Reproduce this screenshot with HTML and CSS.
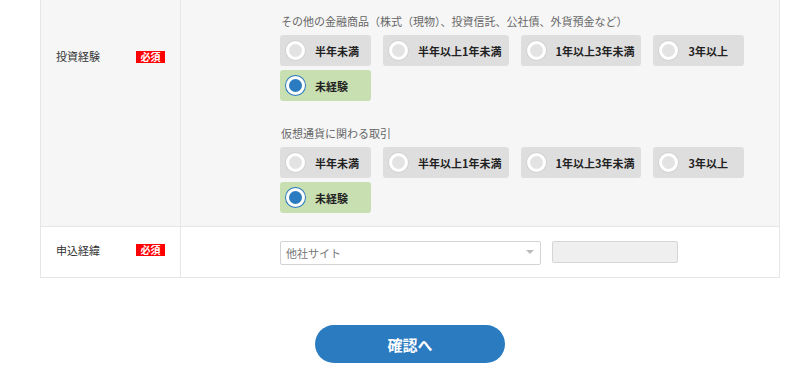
FILE: index.html
```html
<!DOCTYPE html>
<html lang="ja">
<head>
  <meta charset="UTF-8">
  <meta name="viewport" content="width=device-width, initial-scale=1.0">
  <title>お申込みフォーム</title>
  <link rel="stylesheet" href="styles.css">
</head>
<body>
  <form class="entry-form">
    <div class="form-table">
      <div class="form-row form-row-gray">
        <div class="form-label form-label-top">
          <span>投資経験</span>
          <span class="required">必須</span>
        </div>
        <div class="form-field">
          <div class="question">
            <p class="question-title">その他の金融商品（株式（現物）、投資信託、公社債、外貨預金など）</p>
            <div class="options">
              <label class="option"><input type="radio" name="exp-other"><span>半年未満</span></label>
              <label class="option"><input type="radio" name="exp-other"><span>半年以上1年未満</span></label>
              <label class="option"><input type="radio" name="exp-other"><span>1年以上3年未満</span></label>
              <label class="option"><input type="radio" name="exp-other"><span>3年以上</span></label>
              <label class="option"><input type="radio" name="exp-other" checked><span>未経験</span></label>
            </div>
          </div>
          <div class="question">
            <p class="question-title">仮想通貨に関わる取引</p>
            <div class="options">
              <label class="option"><input type="radio" name="exp-crypto"><span>半年未満</span></label>
              <label class="option"><input type="radio" name="exp-crypto"><span>半年以上1年未満</span></label>
              <label class="option"><input type="radio" name="exp-crypto"><span>1年以上3年未満</span></label>
              <label class="option"><input type="radio" name="exp-crypto"><span>3年以上</span></label>
              <label class="option"><input type="radio" name="exp-crypto" checked><span>未経験</span></label>
            </div>
          </div>
        </div>
      </div>
      <div class="form-row">
        <div class="form-label form-label-middle">
          <span>申込経緯</span>
          <span class="required">必須</span>
        </div>
        <div class="form-field form-field-inline">
          <div class="select-wrap">
            <select class="select">
              <option>他社サイト</option>
              <option>検索エンジン</option>
              <option>知人の紹介</option>
              <option>その他</option>
            </select>
          </div>
          <input type="text" class="text-input" disabled>
        </div>
      </div>
    </div>
    <div class="submit-area">
      <button type="button" class="submit-button">確認へ</button>
    </div>
  </form>
</body>
</html>
```

FILE: styles.css
```css
body {
  margin: 0;
  font-family: "Noto Sans CJK JP", "Noto Sans", sans-serif;
  color: #333;
  background-color: #fff;
}
.entry-form {
  margin: 0 20px 0 40px;
}
.form-table {
  border: 1px solid #e6e6e6;
  border-top: none;
}
.form-row {
  display: grid;
  grid-template-columns: 140px 1fr;
}
.form-row + .form-row {
  border-top: 1px solid #e6e6e6;
}
.form-row-gray {
  background-color: #f6f6f6;
}
.form-label {
  display: flex;
  justify-content: space-between;
  padding: 0 15px;
  border-right: 1px solid #e6e6e6;
  font-size: 11px;
  line-height: 16px;
}
.form-label-top {
  align-items: flex-start;
  padding-top: 48px;
}
.form-label-middle {
  align-items: center;
  padding-bottom: 4px;
}
.required {
  display: inline-block;
  width: 29px;
  margin-top: 3px;
  background-color: #ff0000;
  color: #fff;
  font-size: 10px;
  font-weight: bold;
  line-height: 12px;
  text-align: center;
}
.form-label-middle .required {
  margin-top: 0;
}
.form-field {
  padding: 13px 20px 13px 99px;
}
.question + .question {
  margin-top: 24px;
}
.question-title {
  margin: 0 0 6px 1px;
  font-size: 11px;
  line-height: 16px;
  color: #666;
}
.options {
  display: flex;
  flex-wrap: wrap;
  gap: 4px 12px;
}
.option {
  display: flex;
  align-items: center;
  gap: 10px;
  box-sizing: border-box;
  min-width: 91px;
  height: 31px;
  padding: 0 7px 0 6px;
  background-color: #dedede;
  border-radius: 3px;
  font-size: 11px;
  font-weight: bold;
  color: #222;
  cursor: pointer;
}
.option:has(input:checked) {
  background-color: #c8dfb1;
}
.option input {
  appearance: none;
  -webkit-appearance: none;
  box-sizing: border-box;
  width: 19px;
  height: 19px;
  margin: 0;
  border: 3px solid #fff;
  border-radius: 50%;
  background-color: #e3e3e3;
  box-shadow: 0 0 0 1px #d2d2d2;
}
.option input:checked {
  background-color: #2a7bc0;
  box-shadow: 0 0 0 1px #2a7bc0;
}
.form-field-inline {
  display: flex;
  align-items: center;
  gap: 11px;
  padding-top: 12px;
  padding-bottom: 12px;
}
.select-wrap {
  position: relative;
}
.select-wrap::after {
  content: "";
  position: absolute;
  right: 7px;
  top: 11px;
  border-left: 4px solid transparent;
  border-right: 4px solid transparent;
  border-top: 4px solid #bbb;
  pointer-events: none;
}
.select {
  appearance: none;
  -webkit-appearance: none;
  box-sizing: border-box;
  width: 261px;
  height: 24px;
  padding: 0 20px 0 5px;
  border: 1px solid #d3d3d3;
  border-radius: 2px;
  background-color: #fff;
  font-family: inherit;
  font-size: 11px;
  color: #777;
}
.text-input {
  box-sizing: border-box;
  width: 126px;
  height: 22px;
  border: 1px solid #d6d6d6;
  border-radius: 2px;
  background-color: #efefef;
}
.submit-area {
  display: flex;
  justify-content: center;
  margin-top: 47px;
}
.submit-button {
  width: 190px;
  height: 38px;
  border: none;
  border-radius: 19px;
  background-color: #2a7bbf;
  color: #fff;
  font-family: inherit;
  font-size: 15px;
  font-weight: bold;
  cursor: pointer;
}
.submit-button:hover {
  background-color: #236aa6;
}
```
